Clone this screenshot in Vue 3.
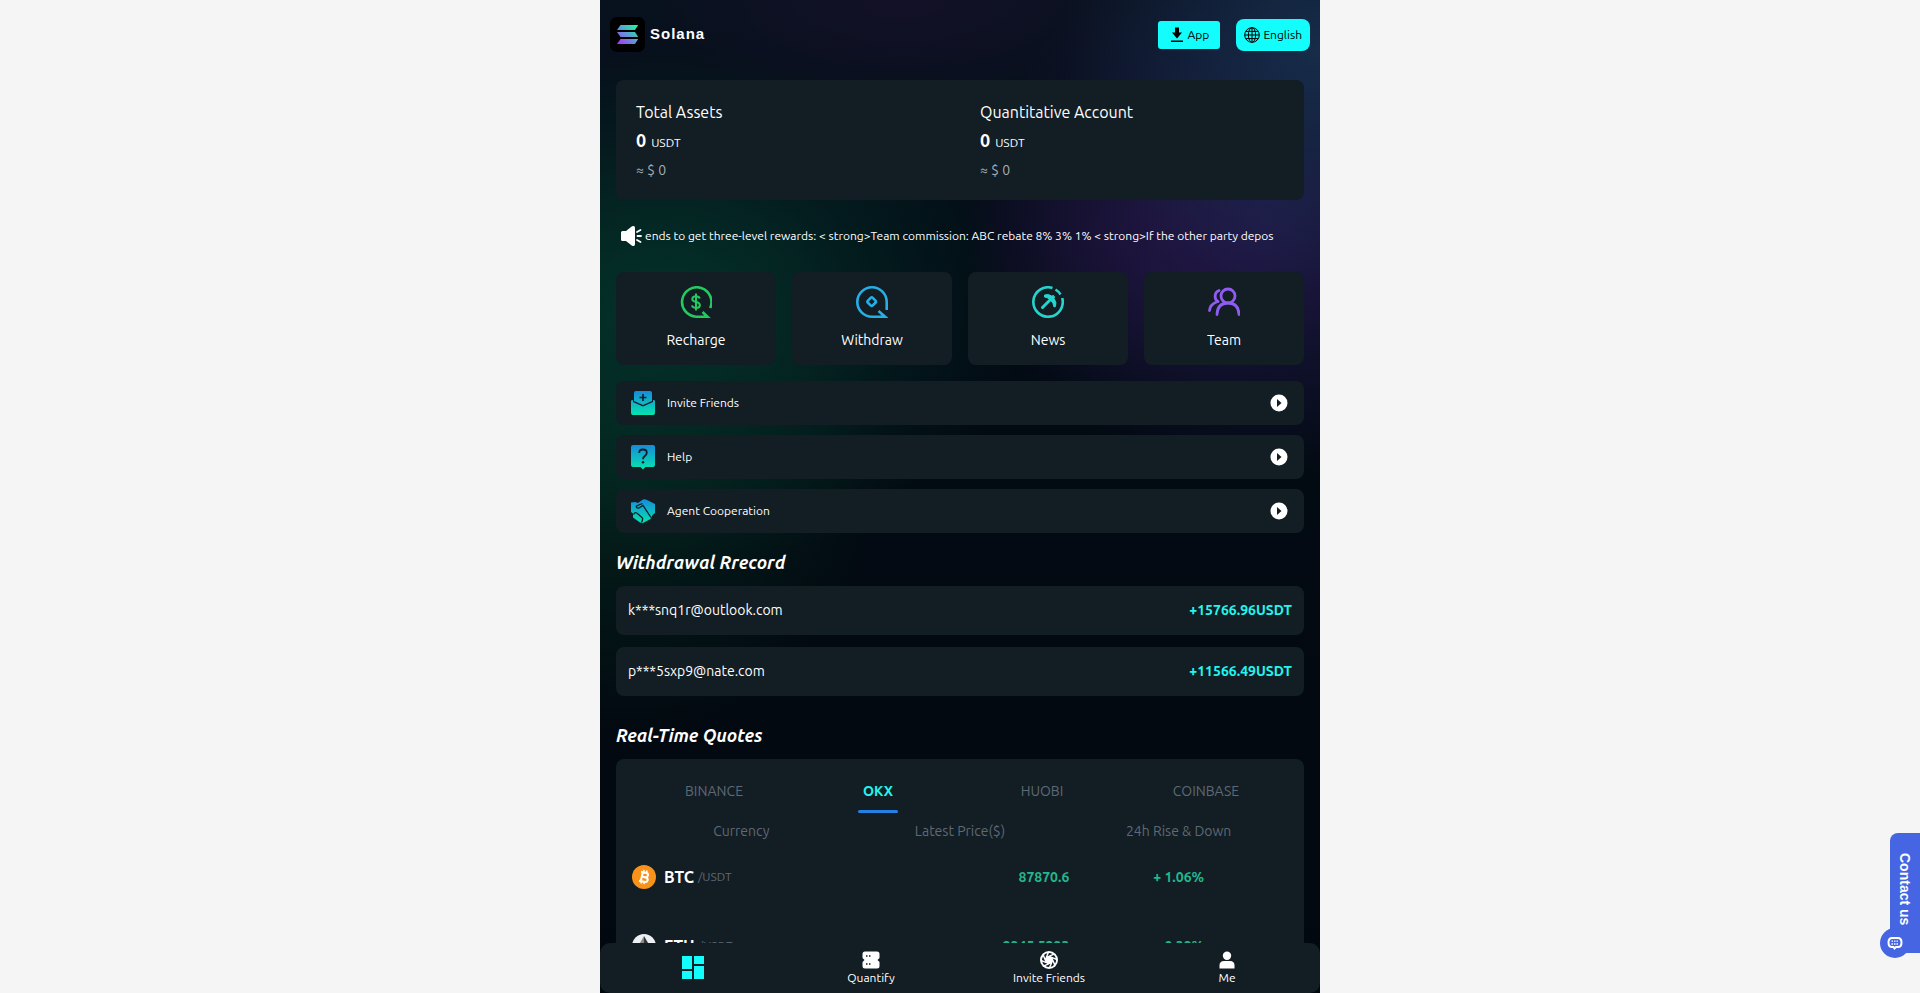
<template>
  <div class="app-shell">
    <div class="page">
      <header class="top-bar">
        <a href="#" class="brand">
          <svg class="brand-logo" viewBox="0 0 35 35" aria-hidden="true">
            <defs>
              <linearGradient id="sol" gradientUnits="userSpaceOnUse" x1="26" y1="8" x2="10" y2="27">
                <stop offset="0" stop-color="#19fb9b" />
                <stop offset="0.5" stop-color="#5d9bd6" />
                <stop offset="1" stop-color="#a63cf0" />
              </linearGradient>
            </defs>
            <rect width="35" height="35" rx="7" fill="#000" />
            <g fill="url(#sol)">
              <path d="M10.500 8H28.200L25 13H7Z" />
              <path d="M7 15H25L28.200 20H10.500Z" />
              <path d="M10.500 22H28.200L25 27H7Z" />
            </g>
          </svg>
          <span class="brand-name">Solana</span>
        </a>
        <div class="top-actions">
          <button type="button" class="btn-app">
            <svg width="14" height="16" viewBox="0 0 14 16" aria-hidden="true">
              <path d="M5 .5h4v5h3L7 11.500 2 5.500h3zM1 13.500h12v1.500H1z" />
            </svg>
            App
          </button>
          <button type="button" class="btn-lang">
            <svg width="16" height="16" viewBox="0 0 16 16" fill="none" stroke="#000" aria-hidden="true">
              <circle cx="8" cy="8" r="7.300" />
              <ellipse cx="8" cy="8" rx="3.600" ry="7.300" />
              <path d="M8 .7v14.600M.7 8h14.600M1.800 4.400h12.400M1.800 11.600h12.400" />
            </svg>
            English
          </button>
        </div>
      </header>

      <main class="content">
        <section class="assets card">
          <div v-for="item in assets" :key="item.title" class="asset">
            <div class="asset-title">{{ item.title }}</div>
            <div class="asset-value">
              <strong>{{ item.value }}</strong>
              <span>USDT</span>
            </div>
            <div class="asset-approx">≈ $ {{ item.value }}</div>
          </div>
        </section>

        <div class="notice">
          <svg width="22" height="22" viewBox="0 0 22 22" aria-hidden="true">
            <path
              d="M1 7.500Q1 6 2.500 6H6L12 1.300Q15 0 15 3V19Q15 22 12 20.700L6 16H2.500Q1 16 1 14.500Z"
              fill="#fff"
            />
            <path
              d="M17 7l3.500-2M17.500 11h3.500M17 15l3.500 2"
              stroke="#fff"
              stroke-width="1.800"
              stroke-linecap="round"
            />
          </svg>
          <div class="notice-view">
            <p class="notice-text">{{ notice }}</p>
          </div>
        </div>

        <!-- 快捷入口 -->
        <nav class="shortcuts">
          <a href="#" class="shortcut card">
            <svg viewBox="0 0 32 32" fill="none" stroke="#24c95f" stroke-width="2.600" aria-hidden="true">
              <path d="M30.200 22A14.700 14.700 0 1 0 16 30.700H27.500L22.500 26" />
              <path
                d="M19.700 12.500Q19.200 10.200 16 10.200Q12.300 10.200 12.300 13Q12.300 15.300 16 15.900Q19.900 16.600 19.900 19.200Q19.900 21.900 16 21.900Q12.500 21.900 12 19.400M16 7.500V24.500"
                stroke-width="2"
              />
            </svg>
            Recharge
          </a>
          <a href="#" class="shortcut card">
            <svg viewBox="0 0 32 32" fill="none" stroke="#27aee5" stroke-width="2.600" aria-hidden="true">
              <path d="M30.700 24V16A14.700 14.700 0 1 0 16 30.700H29L22.500 25" />
              <rect x="12.300" y="12.300" width="6.800" height="6.800" rx="1.500" transform="rotate(45 15.700 15.700)" />
            </svg>
            Withdraw
          </a>
          <a href="#" class="shortcut card">
            <svg viewBox="0 0 32 32" fill="none" stroke="#25d5cd" stroke-width="2.600" aria-hidden="true">
              <path d="M20.500 2A14.700 14.700 0 1 0 30.200 12" />
              <path d="M23.500 3.500A15 15 0 0 1 28.500 8.500" />
              <path d="M10.500 21.500L18.500 13.500" stroke-width="3" stroke-linecap="round" />
              <path
                d="M12.500 9Q17 7.500 19.500 10L21.500 9.500 22.500 11 22 12.500Q25 16.500 23.500 20.500L22 21Q21.500 16.500 18.500 14Q16 11.500 12.500 11Z"
                fill="#25d5cd"
                stroke-width="1"
                stroke-linejoin="round"
              />
            </svg>
            News
          </a>
          <a href="#" class="shortcut card">
            <svg
              viewBox="0 0 32 32"
              fill="none"
              stroke="#8f5bf0"
              stroke-width="2.800"
              stroke-linecap="round"
              aria-hidden="true"
            >
              <circle cx="20" cy="10" r="7" />
              <path d="M9 28.500Q9.500 17 20 17Q30.500 17 31 28.500" />
              <path d="M11 4.500A5.500 6 0 0 0 10 15.500M8.500 16Q2 18.500 1.500 24.500" />
            </svg>
            Team
          </a>
        </nav>

        <nav class="menu">
          <a href="#" class="menu-row card">
            <svg class="menu-icon" viewBox="0 0 24 24" aria-hidden="true">
              <defs>
                <linearGradient id="aqua" gradientUnits="userSpaceOnUse" x1="0" y1="0" x2="0" y2="24">
                  <stop offset="0" stop-color="#168bdc" />
                  <stop offset="1" stop-color="#06e3ae" />
                </linearGradient>
              </defs>
              <g fill="url(#aqua)">
                <path d="M3 2Q3 0 5 0H19Q21 0 21 2V10L12 14 3 10Z" />
                <path d="M0 9.500L2 9V11L12 15.500 22 11V9L24 9.500V22Q24 24 22 24H2Q0 24 0 22Z" />
              </g>
              <path d="M12 3v7M8.500 6.500h7" stroke="#121d24" stroke-width="1.600" />
            </svg>
            <span class="menu-label">Invite Friends</span>
            <svg class="menu-arrow" viewBox="0 0 18 18" aria-hidden="true">
              <circle cx="9" cy="9" r="8.500" fill="#fff" />
              <path d="M7 5L11.500 9 7 13Z" fill="#121d24" />
            </svg>
          </a>
          <a href="#" class="menu-row card">
            <svg class="menu-icon" viewBox="0 0 24 24" aria-hidden="true">
              <path
                d="M2 0H22Q24 0 24 2V20Q24 22 22 22H14.500L12 24.500 9.500 22H2Q0 22 0 20V2Q0 0 2 0Z"
                fill="url(#aqua)"
              />
              <path
                d="M8.200 8Q8.200 4.500 12 4.500Q15.800 4.500 15.800 7.800Q15.800 9.500 13.800 11Q12 12.300 12 14.300"
                fill="none"
                stroke="#121d24"
                stroke-width="1.800"
              />
              <circle cx="12" cy="17.200" r="1.200" fill="#121d24" />
            </svg>
            <span class="menu-label">Help</span>
            <svg class="menu-arrow" viewBox="0 0 18 18" aria-hidden="true">
              <circle cx="9" cy="9" r="8.500" fill="#fff" />
              <path d="M7 5L11.500 9 7 13Z" fill="#121d24" />
            </svg>
          </a>
          <a href="#" class="menu-row card">
            <svg class="menu-icon" viewBox="0 0 24 24" aria-hidden="true">
              <path
                d="M0 3.500L4 3 7 4 12 .5Q14 0 16 1L24 5V14L21.500 16 19.500 20 12 24 9 23.500 2 18.500V14.500L0 13Z"
                fill="url(#aqua)"
              />
              <path
                d="M11.500 4.500L5.500 7Q5 9.500 8 9L12 6.500L20 18.500M2.500 15.500Q4 12 7 15L11.500 19Q12 21 10.500 23.500"
                fill="none"
                stroke="#121d24"
                stroke-width="1.300"
              />
            </svg>
            <span class="menu-label">Agent Cooperation</span>
            <svg class="menu-arrow" viewBox="0 0 18 18" aria-hidden="true">
              <circle cx="9" cy="9" r="8.500" fill="#fff" />
              <path d="M7 5L11.500 9 7 13Z" fill="#121d24" />
            </svg>
          </a>
        </nav>

        <!-- 提现记录 -->
        <h2 class="section-title">Withdrawal Rrecord</h2>
        <ul class="records">
          <li v-for="record in records" :key="record.account" class="record card">
            <span>{{ record.account }}</span>
            <strong>+{{ record.amount }}USDT</strong>
          </li>
        </ul>

        <!-- 实时行情 -->
        <h2 class="section-title">Real-Time Quotes</h2>
        <section class="quotes card">
          <div class="tabs" role="tablist">
            <button
              v-for="tab in tabs"
              :key="tab"
              type="button"
              role="tab"
              class="tab"
              :class="{ active: tab === activeTab }"
              :aria-selected="tab === activeTab"
              @click="activeTab = tab"
            >
              {{ tab }}
            </button>
          </div>
          <table class="quote-table">
            <thead>
              <tr>
                <th>Currency</th>
                <th>Latest Price($)</th>
                <th>24h Rise &amp; Down</th>
              </tr>
            </thead>
            <tbody>
              <tr v-for="coin in coins" :key="coin.name">
                <td>
                  <div class="coin">
                    <svg v-if="coin.name === 'BTC'" viewBox="0 0 24 24" aria-hidden="true">
                      <circle cx="12" cy="12" r="12" fill="#f7931a" />
                      <g fill="none" stroke="#fff" stroke-width="2" transform="rotate(13 12 12)">
                        <path d="M8 7.500H13Q15.500 7.500 15.500 9.700Q15.500 12 13 12H9.700M13 12Q16.300 12 16.300 14.300Q16.300 16.700 13 16.700H8M9.800 7.500V16.700" />
                        <path d="M10.500 5V7.500M13.500 5V7.500M10.500 16.500V19M13.500 16.500V19" stroke-width="1.500" />
                      </g>
                    </svg>
                    <svg v-else viewBox="0 0 24 24" aria-hidden="true">
                      <circle cx="12" cy="12" r="12" fill="#ecf0f4" />
                      <path d="M12 2L6 12.300 12 16Z" fill="#8a8a8a" />
                      <path d="M12 2L18 12.300 12 16Z" fill="#343434" />
                      <path d="M6 13.500L12 22 18 13.500 12 17Z" fill="#5c5c5c" />
                    </svg>
                    <strong>{{ coin.name }}</strong>
                    <span>/USDT</span>
                  </div>
                </td>
                <td class="price">{{ coin.price }}</td>
                <td class="change">{{ coin.change }}</td>
              </tr>
            </tbody>
          </table>
        </section>
      </main>

      <!-- 底部导航 -->
      <nav class="tab-bar">
        <a href="#" class="tab-item" aria-label="Home">
          <svg width="24" height="24" viewBox="0 0 24 24" fill="#12fdfb" aria-hidden="true">
            <path d="M1 0h10v13H1zM13 0h10v8H13zM1 15h10v8H1zM13 10h10v13H13z" />
          </svg>
        </a>
        <a href="#" class="tab-item">
          <svg width="18" height="18" viewBox="0 0 18 18" aria-hidden="true">
            <path
              d="M3 .5H15Q17.500 .5 17.500 3V7L15.500 9 17.500 11V15Q17.500 17.500 15 17.500H3Q.5 17.500 .5 15V11L2.500 9 .5 7V3Q.5 .5 3 .5Z"
              fill="#fff"
            />
            <path d="M4 5h1.500M7 5h1.500M4 13h1.500M7 13h1.500" stroke="#121d24" stroke-width="1.500" />
          </svg>
          Quantify
        </a>
        <a href="#" class="tab-item">
          <svg width="18" height="18" viewBox="0 0 18 18" aria-hidden="true">
            <circle cx="9" cy="9" r="9" fill="#fff" />
            <path
              v-for="angle in [0, 45, 90, 135, 180, 225, 270, 315]"
              :key="angle"
              d="M7.500 5.200L9 2Q11 2 12.500 3Z"
              fill="#121d24"
              :transform="`rotate(${angle} 9 9)`"
            />
          </svg>
          Invite Friends
        </a>
        <a href="#" class="tab-item">
          <svg width="18" height="18" viewBox="0 0 18 18" fill="#fff" aria-hidden="true">
            <circle cx="9" cy="4.700" r="4.200" />
            <path d="M1.500 17.500V14.500Q1.500 10 6 10H12Q16.500 10 16.500 14.500V17.500Z" />
          </svg>
          Me
        </a>
      </nav>
    </div>

    <button type="button" class="contact">
      <span class="contact-text">Contact us</span>
      <span class="contact-badge">
        <svg width="16" height="16" viewBox="0 0 16 16" fill="none" stroke="#fff" stroke-width="2" aria-hidden="true">
          <path d="M5 3H11Q14.500 3 14.500 7.500Q14.500 12 11 12H9L7.500 13.500 6.500 12H5Q1.500 12 1.500 7.500Q1.500 3 5 3Z" />
          <path d="M4.500 6.200h7M4.500 9h7" stroke-width="1.300" stroke-dasharray="1.500 1" />
        </svg>
      </span>
    </button>
  </div>
</template>

<script setup>
import { ref } from 'vue'

const assets = [
  { title: 'Total Assets', value: 0 },
  { title: 'Quantitative Account', value: 0 },
]

const notice =
  'friends to get three-level rewards: < strong>Team commission: ABC rebate 8% 3% 1% < strong>If the other party deposits'

const records = [
  { account: 'k***snq1r@outlook.com', amount: '15766.96' },
  { account: 'p***5sxp9@nate.com', amount: '11566.49' },
]

const tabs = ['BINANCE', 'OKX', 'HUOBI', 'COINBASE']
const activeTab = ref('OKX')

const coins = [
  { name: 'BTC', price: '87870.6', change: '+ 1.06%' },
  { name: 'ETH', price: '2945.5293', change: '+ 0.39%' },
]
</script>

<style>
body {
  margin: 0;
  background: #f5f5f5;
}
</style>

<style scoped>
.app-shell {
  height: 100vh;
  font-family: Ubuntu, 'Noto Sans', sans-serif;
  font-size: 14px;
  line-height: 20px;
  color: #fff;
  background: #f5f5f5;
}

.app-shell * {
  box-sizing: border-box;
}

button {
  border: 0;
  padding: 0;
  font: inherit;
  cursor: pointer;
}

a {
  color: inherit;
  text-decoration: none;
}

svg {
  flex-shrink: 0;
}

.page {
  display: flex;
  flex-direction: column;
  max-width: 720px;
  height: 100%;
  margin: 0 auto;
  overflow: hidden;
  background:
    radial-gradient(ellipse 260px 240px at 100% 5%, #162c49 0%, rgba(22, 44, 73, 0) 100%),
    radial-gradient(ellipse 300px 260px at 92% 22%, rgba(35, 26, 78, 0.9) 0%, rgba(35, 26, 78, 0) 100%),
    radial-gradient(ellipse 200px 160px at 78% 24%, rgba(40, 16, 62, 0.6) 0%, rgba(40, 16, 62, 0) 100%),
    radial-gradient(ellipse 260px 110px at 42% 0%, rgba(22, 17, 42, 0.8) 0%, rgba(22, 17, 42, 0) 100%),
    radial-gradient(ellipse 360px 260px at 9% 31%, #04312a 0%, rgba(4, 49, 42, 0) 100%),
    radial-gradient(ellipse 260px 300px at 4% 44%, rgba(4, 42, 30, 0.8) 0%, rgba(4, 42, 30, 0) 100%),
    linear-gradient(#08111e 0%, #020b14 25%, #02080f 100%);
}

.card {
  background: #121d24;
  border-radius: 8px;
}

.top-bar {
  display: flex;
  flex-shrink: 0;
  align-items: center;
  justify-content: space-between;
  height: 70px;
  padding: 0 10px;
}

.brand {
  display: flex;
  align-items: center;
  gap: 5px;
  padding-bottom: 2px;
}

.brand-logo {
  width: 35px;
  height: 35px;
}

.brand-name {
  font-family: 'Liberation Sans', Arial, sans-serif;
  font-size: 15px;
  font-weight: 700;
  letter-spacing: 1px;
}

.top-actions {
  display: flex;
  align-items: center;
  gap: 16px;
}

.btn-app,
.btn-lang {
  display: flex;
  align-items: center;
  justify-content: center;
  background: #12fdfb;
  color: #000;
  font-size: 12px;
}

.btn-app {
  gap: 4px;
  height: 28px;
  padding: 0 11px 0 12px;
  border-radius: 3px;
}

.btn-lang {
  gap: 3px;
  height: 32px;
  padding: 0 8px;
  border-radius: 8px;
}

.content {
  flex: 1;
  min-height: 0;
  padding: 10px 16px 0;
  overflow: hidden;
}

.assets {
  display: grid;
  grid-template-columns: 1fr 1fr;
  height: 120px;
  padding: 20px 0 0;
}

.asset {
  padding-left: 20px;
}

.asset-title {
  font-size: 16px;
  line-height: 24px;
}

.asset-value {
  display: flex;
  align-items: baseline;
  gap: 5px;
  margin-top: 2px;
  line-height: 28px;
}

.asset-value strong {
  font-size: 18px;
}

.asset-value span {
  font-size: 12px;
}

.asset-approx {
  margin-top: 3px;
  color: #a3abb1;
}

.notice {
  display: flex;
  align-items: center;
  gap: 3px;
  height: 72px;
  padding: 0 30px 0 4px;
}

.notice-view {
  flex: 1;
  overflow: hidden;
}

.notice-text {
  margin: 0 0 0 -12px;
  font-size: 12px;
  white-space: nowrap;
}

.shortcuts {
  display: grid;
  grid-template-columns: repeat(4, 1fr);
  gap: 16px;
}

.shortcut {
  display: flex;
  flex-direction: column;
  align-items: center;
  gap: 12px;
  height: 93px;
  padding-top: 14px;
}

.shortcut svg {
  width: 32px;
  height: 32px;
}

.menu {
  display: flex;
  flex-direction: column;
  gap: 10px;
  margin-top: 16px;
}

.menu-row {
  display: flex;
  align-items: center;
  gap: 12px;
  height: 44px;
  padding: 0 16px 0 15px;
  font-size: 12px;
}

.menu-icon {
  width: 24px;
  height: 24px;
  overflow: visible;
}

.menu-label {
  flex: 1;
}

.menu-arrow {
  width: 18px;
  height: 18px;
}

.section-title {
  margin: 15px 0 10px;
  font-size: 18px;
  font-style: italic;
  font-weight: 700;
  line-height: 28px;
}

.records {
  display: flex;
  flex-direction: column;
  gap: 12px;
  margin: 0 0 25px;
  padding: 0;
  list-style: none;
}

.record {
  display: flex;
  align-items: center;
  justify-content: space-between;
  height: 49px;
  padding: 0 12px 2px;
}

.record strong,
.tab.active {
  color: #25f4ee;
}

.quotes {
  padding: 10px 16px 0;
}

.tabs {
  display: grid;
  grid-template-columns: repeat(4, 1fr);
}

.tab {
  display: flex;
  flex-direction: column;
  align-items: center;
  height: 44px;
  padding-top: 12px;
  background: none;
  color: #5f6975;
}

.tab.active {
  font-weight: 700;
}

.tab.active::after {
  content: '';
  width: 40px;
  height: 3px;
  margin-top: 9px;
  border-radius: 3px;
  background: #2480e4;
}

.quote-table {
  width: 100%;
  table-layout: fixed;
  border-collapse: collapse;
}

.quote-table th {
  height: 36px;
  padding: 0;
  font-weight: 400;
  color: #5f6975;
}

.quote-table td {
  height: 69px;
  padding: 0 0 14px;
  font-weight: 700;
  color: #22b68c;
}

.coin {
  display: flex;
  align-items: center;
  font-weight: 400;
}

.coin svg {
  width: 24px;
  height: 24px;
  margin-right: 8px;
}

.coin strong {
  margin-right: 4px;
  font-size: 16px;
  color: #fff;
}

.coin span {
  font-size: 12px;
  color: #5f6975;
}

.price {
  text-align: right;
}

.change {
  text-align: center;
}

.tab-bar {
  display: grid;
  flex-shrink: 0;
  grid-template-columns: repeat(4, 1fr);
  height: 50px;
  padding: 0 4px;
  border-radius: 10px;
  background: #121d24;
}

.tab-item {
  display: flex;
  flex-direction: column;
  align-items: center;
  justify-content: center;
  font-size: 12px;
  line-height: 16px;
}

.tab-item svg {
  margin-bottom: 1px;
}

/* 右侧客服按钮 */
.contact {
  position: fixed;
  right: 0;
  bottom: 40px;
  width: 30px;
  height: 120px;
  padding: 20px 0 0;
  border-radius: 8px 0 0 8px;
  background: #4565e3;
  color: #fff;
}

.contact-text {
  display: block;
  height: 100%;
  font-family: 'Liberation Sans', Arial, sans-serif;
  font-size: 14px;
  font-weight: 700;
  line-height: 30px;
  text-align: left;
  writing-mode: vertical-rl;
}

.contact-badge {
  position: absolute;
  bottom: -5px;
  left: -10px;
  display: flex;
  align-items: center;
  justify-content: center;
  width: 30px;
  height: 30px;
  border-radius: 50%;
  background: #4565e3;
}
</style>
